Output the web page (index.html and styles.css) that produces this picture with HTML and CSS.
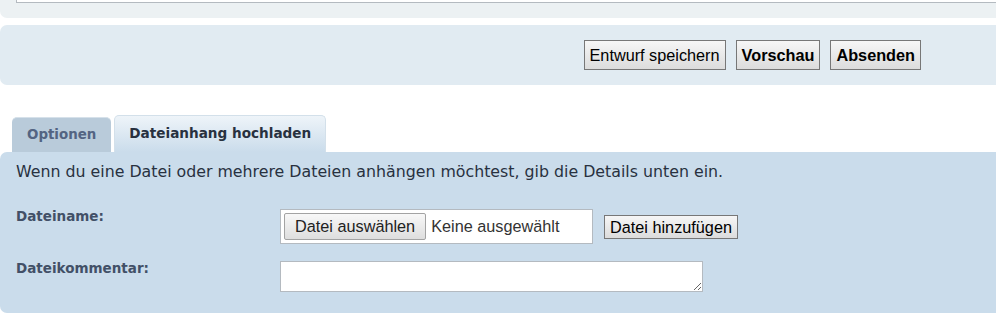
FILE: index.html
```html
<!DOCTYPE html>
<html lang="de">
<head>
    <meta charset="UTF-8">
    <meta name="viewport" content="width=device-width, initial-scale=1.0">
    <title>Beitrag erstellen</title>
    <link rel="stylesheet" href="styles.css">
</head>
<body>
    <div class="wrap">
        <div class="panel panel-top">
            <div class="field-end"></div>
        </div>

        <div class="panel panel-submit">
            <div class="submit-buttons">
                <button class="btn">Entwurf speichern</button>
                <button class="btn btn-strong">Vorschau</button>
                <button class="btn btn-strong">Absenden</button>
            </div>
        </div>

        <ul class="tabs">
            <li class="tab">Optionen</li>
            <li class="tab tab-active">Dateianhang hochladen</li>
        </ul>

        <div class="panel panel-attach">
            <p class="explain">Wenn du eine Datei oder mehrere Dateien anhängen möchtest, gib die Details unten ein.</p>

            <dl class="row">
                <dt>Dateiname:</dt>
                <dd class="file-line">
                    <div class="file-box">
                        <button class="file-btn">Datei auswählen</button>
                        <span class="file-none">Keine ausgewählt</span>
                    </div>
                    <button class="btn btn-small">Datei hinzufügen</button>
                </dd>
            </dl>

            <dl class="row row-comment">
                <dt>Dateikommentar:</dt>
                <dd><textarea class="comment"></textarea></dd>
            </dl>
        </div>
    </div>
</body>
</html>
```

FILE: styles.css
```css
html, body {
    overflow: hidden;
}
body {
    margin: 0;
    background-color: #fff;
    font-family: "DejaVu Sans", Verdana, sans-serif;
    color: #333;
}
.wrap {
    margin-right: -10px;
}
.panel {
    border-radius: 7px;
}
.panel-top {
    background-color: #ecf1f3;
    border-radius: 0 0 7px 7px;
    padding: 0 0 15px 16px;
}
.field-end {
    height: 2px;
    background-color: #fff;
    border: 1px solid #b4bac0;
    border-top: none;
}
.panel-submit {
    background-color: #e1ebf2;
    margin-top: 7px;
    padding: 15px 85px 15px 0;
}
.submit-buttons {
    display: flex;
    justify-content: flex-end;
    gap: 10px;
}
.btn {
    height: 30px;
    padding: 0 5px;
    font-family: "Liberation Sans", Arial, sans-serif;
    font-size: 16.25px;
    color: #000;
    background: linear-gradient(#f6f6f6, #dcdcdc);
    border: 1px solid #777;
    border-radius: 0;
}
.btn-strong {
    font-weight: bold;
}
.btn-small {
    height: 24px;
    line-height: 20px;
}
.tabs {
    display: flex;
    align-items: flex-end;
    gap: 3px;
    list-style: none;
    margin: 30px 0 0;
    padding: 0 0 0 12px;
    height: 37px;
}
.tab {
    height: 35px;
    line-height: 33px;
    padding: 0 15px;
    font-size: 13.4px;
    font-weight: bold;
    color: #536482;
    background-color: #b9cbda;
    border-top: 1px solid #d6e1ea;
    border-radius: 5px 5px 0 0;
    box-sizing: border-box;
}
.tab-active {
    height: 37px;
    line-height: 35px;
    padding: 0 14px;
    font-size: 13.6px;
    color: #28313f;
    background: linear-gradient(#eef4f9, #cadceb);
    border: 1px solid #d3e0ea;
    border-bottom: none;
}
.panel-attach {
    background-color: #cadceb;
    padding: 10px 16px 21px;
}
.explain {
    margin: 0;
    font-size: 15.8px;
    line-height: 20px;
    color: #28313f;
}
.row {
    display: grid;
    grid-template-columns: 264px 1fr;
    margin: 27px 0 0;
}
.row-comment {
    margin-top: 17px;
}
.row dt {
    margin-top: -1px;
    font-size: 13.5px;
    line-height: 16px;
    font-weight: bold;
    color: #425067;
}
.row dd {
    margin: 0;
}
.file-line {
    display: flex;
    align-items: center;
    gap: 11px;
}
.file-box {
    display: flex;
    align-items: center;
    width: 313px;
    height: 35px;
    padding: 0 3px;
    box-sizing: border-box;
    background-color: #fff;
    border: 1px solid #b4bac0;
}
.file-btn {
    height: 27px;
    padding: 0 10px;
    font-family: "Liberation Sans", Arial, sans-serif;
    font-size: 16.25px;
    color: #222;
    background: linear-gradient(#f8f8f8, #dedede);
    border: 1px solid #a3a3a3;
    border-radius: 2px;
}
.file-none {
    margin-left: 5px;
    font-family: "Liberation Sans", Arial, sans-serif;
    font-size: 16.25px;
    color: #333;
}
.comment {
    display: block;
    width: 423px;
    height: 31px;
    box-sizing: border-box;
    margin: 0;
    border: 1px solid #b4bac0;
    background-color: #fff;
    resize: both;
}
```
